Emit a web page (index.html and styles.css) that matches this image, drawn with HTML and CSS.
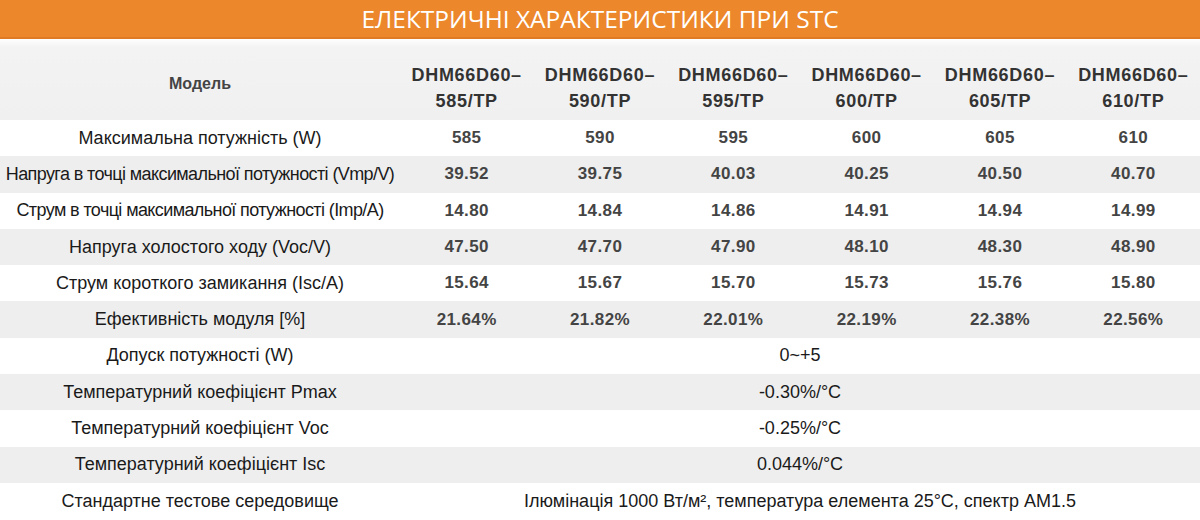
FILE: index.html
```html
<!DOCTYPE html>
<html lang="uk">
<head>
<meta charset="utf-8">
<title>Електричні характеристики при STC</title>
<link rel="stylesheet" href="styles.css">
</head>
<body>
<div class="title">ЕЛЕКТРИЧНІ ХАРАКТЕРИСТИКИ ПРИ STC</div>
<div class="table">
  <div class="row head">
    <div class="label model">Модель</div>
    <div class="cell">DHM66D60–<br>585/TP</div>
    <div class="cell">DHM66D60–<br>590/TP</div>
    <div class="cell">DHM66D60–<br>595/TP</div>
    <div class="cell">DHM66D60–<br>600/TP</div>
    <div class="cell">DHM66D60–<br>605/TP</div>
    <div class="cell">DHM66D60–<br>610/TP</div>
  </div>
  <div class="row">
    <div class="label">Максимальна потужність (W)</div>
    <div class="cell">585</div><div class="cell">590</div><div class="cell">595</div><div class="cell">600</div><div class="cell">605</div><div class="cell">610</div>
  </div>
  <div class="row alt">
    <div class="label tight">Напруга в точці максимальної потужності (Vmp/V)</div>
    <div class="cell">39.52</div><div class="cell">39.75</div><div class="cell">40.03</div><div class="cell">40.25</div><div class="cell">40.50</div><div class="cell">40.70</div>
  </div>
  <div class="row">
    <div class="label tight">Струм в точці максимальної потужності (Imp/A)</div>
    <div class="cell">14.80</div><div class="cell">14.84</div><div class="cell">14.86</div><div class="cell">14.91</div><div class="cell">14.94</div><div class="cell">14.99</div>
  </div>
  <div class="row alt">
    <div class="label">Напруга холостого ходу (Voc/V)</div>
    <div class="cell">47.50</div><div class="cell">47.70</div><div class="cell">47.90</div><div class="cell">48.10</div><div class="cell">48.30</div><div class="cell">48.90</div>
  </div>
  <div class="row">
    <div class="label">Струм короткого замикання (Isc/A)</div>
    <div class="cell">15.64</div><div class="cell">15.67</div><div class="cell">15.70</div><div class="cell">15.73</div><div class="cell">15.76</div><div class="cell">15.80</div>
  </div>
  <div class="row alt">
    <div class="label">Ефективність модуля [%]</div>
    <div class="cell">21.64%</div><div class="cell">21.82%</div><div class="cell">22.01%</div><div class="cell">22.19%</div><div class="cell">22.38%</div><div class="cell">22.56%</div>
  </div>
  <div class="row">
    <div class="label">Допуск потужності (W)</div>
    <div class="span">0~+5</div>
  </div>
  <div class="row alt">
    <div class="label">Температурний коефіцієнт Pmax</div>
    <div class="span">-0.30%/°C</div>
  </div>
  <div class="row">
    <div class="label">Температурний коефіцієнт Voc</div>
    <div class="span">-0.25%/°C</div>
  </div>
  <div class="row alt">
    <div class="label">Температурний коефіцієнт Isc</div>
    <div class="span">0.044%/°C</div>
  </div>
  <div class="row">
    <div class="label">Стандартне тестове середовище</div>
    <div class="span">Ілюмінація 1000 Вт/м², температура елемента 25°C, спектр AM1.5</div>
  </div>
</div>
</body>
</html>
```
FILE: styles.css
```css
html, body {
  margin: 0;
  padding: 0;
  background: #ffffff;
}
body {
  width: 1200px;
  height: 520px;
  overflow: hidden;
  font-family: "Liberation Sans", Arial, sans-serif;
  color: #1a1a1a;
}
.title {
  height: 37px;
  line-height: 37px;
  background: #ec872b;
  border-bottom: 2px solid #df7b22;
  color: #ffffff;
  font-family: "Open Sans", "Liberation Sans", sans-serif;
  font-size: 24.5px;
  text-align: center;
}
.table {
  display: flex;
  flex-direction: column;
}
.row {
  display: grid;
  grid-template-columns: 400px repeat(6, 1fr);
  align-items: center;
  height: 36.3px;
}
.row.alt {
  background: #eeeeee;
}
.row.head {
  height: 81px;
  background: linear-gradient(#ffffff 0px, #f3f3f3 8px, #f0f0f0 100%);
  padding-top: 16px;
  box-sizing: border-box;
}
.label {
  text-align: center;
  font-size: 18px;
  white-space: nowrap;
}
.label.tight {
  letter-spacing: -0.6px;
}
.label.model {
  font-size: 16px;
  font-weight: bold;
  color: #444444;
  margin-top: -8px;
}
.cell {
  text-align: center;
  font-size: 17px;
  font-weight: bold;
  color: #444444;
  letter-spacing: 0.4px;
}
.head .cell {
  font-size: 18px;
  line-height: 26px;
  color: #333333;
  letter-spacing: 0.7px;
}
.span {
  grid-column: 2 / -1;
  text-align: center;
  font-size: 18px;
  color: #1a1a1a;
}
```
